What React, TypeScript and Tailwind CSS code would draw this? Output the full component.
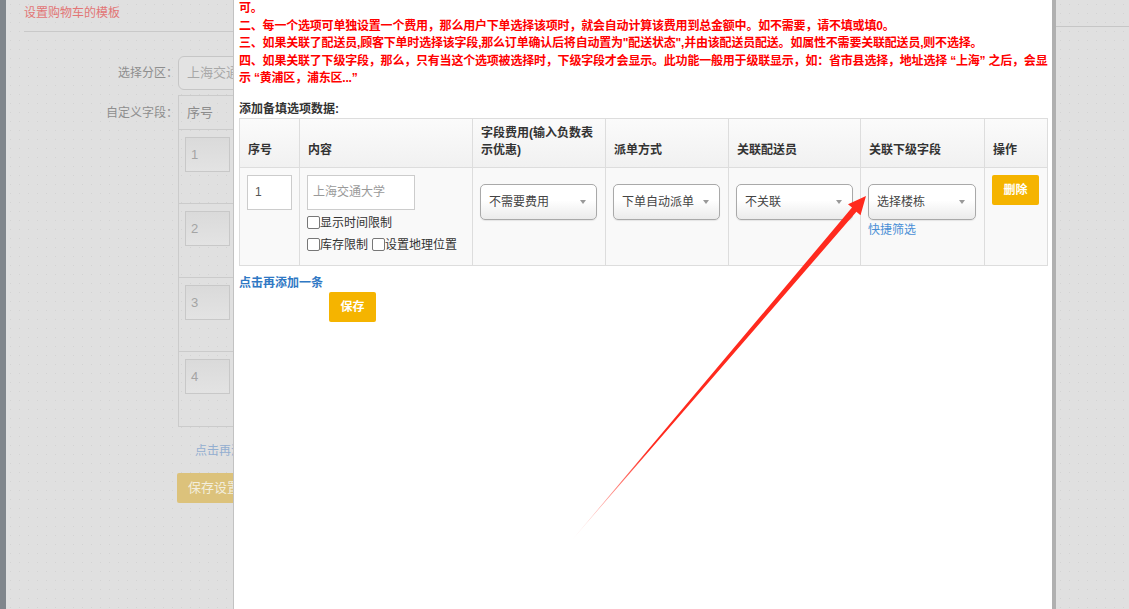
import React from "react"

const font = "font-['Liberation_Sans','Noto_Sans_CJK_SC',sans-serif]"

const notes = [
  "可。",
  "二、每一个选项可单独设置一个费用，那么用户下单选择该项时，就会自动计算该费用到总金额中。如不需要，请不填或填0。",
  "三、如果关联了配送员,顾客下单时选择该字段,那么订单确认后将自动置为\"配送状态\",并由该配送员配送。如属性不需要关联配送员,则不选择。",
  "四、如果关联了下级字段，那么，只有当这个选项被选择时，下级字段才会显示。此功能一般用于级联显示，如：省市县选择，地址选择 “上海” 之后，会显",
  "示 “黄浦区，浦东区...”",
]

const Arrow = () => (
  <span className="inline-block w-0 h-0 border-x-[3px] border-x-transparent border-t-[4px] border-t-[#999]" />
)

const Select = ({ label, width }: { label: string; width: string }) => (
  <div
    className={`${width} h-[36px] mt-[9px] rounded-[5px] border border-[#a9a9a9] bg-gradient-to-b from-white from-45% to-[#ebebeb] flex items-center justify-between pl-[8px] pr-[10px] text-[12px] text-[#444] shadow-[0_1px_1px_rgba(0,0,0,0.08)]`}
  >
    <span>{label}</span>
    <Arrow />
  </div>
)

const Check = ({ label }: { label: string }) => (
  <span className="inline-flex items-center">
    <span className="inline-block w-[13px] h-[13px] border border-[#777] rounded-[2px] bg-white" />
    <span>{label}</span>
  </span>
)

const dots = "bg-[radial-gradient(#d3d3d3_0.6px,transparent_0.7px)] bg-[length:9px_9px]"

// 背景页面（被弹窗遮住的部分）
const BackgroundPage = () => (
  <div className="flex h-full">
    <div className="w-[6px] h-full bg-[#80868c]" />
    <div className={`w-[1050px] h-full overflow-hidden pl-[18px] ${dots}`}>
      <div className="pt-[5px] leading-[16px] text-[12px] text-[#e27575]">设置购物车的模板</div>
      <div className="mt-[10px] border-b border-[#c9c9c9]" />
      <div className="mt-[24px] flex items-center">
        <div className="w-[154px] text-right text-[12px] text-[#8e8e8e]">选择分区：</div>
        <div className="w-[300px] h-[34px] rounded-[6px] border border-[#c6c6c6] bg-[#e3e3e3] flex items-center pl-[8px] text-[13px] text-[#a8a8a8]">
          上海交通大学
        </div>
      </div>
      <div className="mt-[5px] flex">
        <div className="w-[154px] pt-[9px] text-right text-[12px] text-[#8e8e8e]">自定义字段：</div>
        <div className="w-[600px] border border-[#cbcbcb]">
          <div className="h-[34px] flex items-center pl-[8px] text-[13px] text-[#8c8c8c] border-b border-[#cbcbcb]">序号</div>
          {["1", "2", "3", "4"].map((n, i) => (
            <div key={n} className={`h-[74px] pt-[7px] pl-[6px] ${i < 3 ? "border-b border-[#cbcbcb]" : ""}`}>
              <div className="w-[45px] h-[35px] border border-[#c8c8c8] bg-gradient-to-b from-[#dadada] to-[#e3e3e3] flex items-center pl-[5px] text-[13px] text-[#a4a4a4]">
                {n}
              </div>
            </div>
          ))}
        </div>
      </div>
      <div className="mt-[16px] pl-[171px] text-[12px] text-[#93aed0] leading-[16px]">点击再添加一条</div>
      <div className="mt-[14px] ml-[153px] w-[120px] h-[30px] rounded-[2px] bg-[#dcc27b] flex items-center pl-[11px] text-[13px] text-[#f3eedd]">
        保存设置
      </div>
    </div>
    <div className={`flex-1 h-full ${dots}`}>
      <div className="h-[27px] border-b border-[#c6c6c6]" />
    </div>
  </div>
)

const th = "border border-[#dddddd] align-bottom text-left px-[8px] pb-[8px] pt-0 leading-[17px] font-bold text-[12px] text-[#333]"
const td = "border border-[#dddddd] align-top px-[7px] pt-[7px] pb-0"

export default function App() {
  return (
    <div className={`relative w-[1129px] h-[609px] overflow-hidden bg-[#e0e0e0] ${font}`}>
      <BackgroundPage />

      {/* 弹窗 */}
      <div className="absolute left-[233px] top-0 w-[823px] h-full bg-white border-l border-[#c2c2c2] border-r-[4px] border-r-[#b0b0b0] pl-[5px]">
        <div className="text-[12px] font-bold text-[#ff0000] leading-[17.5px] tracking-[-0.2px]">
          {notes.map((line) => (
            <div key={line} className="whitespace-nowrap">
              {line}
            </div>
          ))}
        </div>
        <div className="mt-[12px] leading-[18px] text-[12px] font-bold text-[#333]">添加备填选项数据:</div>

        <table className="table-fixed border-collapse w-[808px]">
          <colgroup>
            <col className="w-[60px]" />
            <col className="w-[173px]" />
            <col className="w-[133px]" />
            <col className="w-[123px]" />
            <col className="w-[132px]" />
            <col className="w-[124px]" />
            <col className="w-[63px]" />
          </colgroup>
          <thead>
            <tr className="h-[49px] bg-gradient-to-b from-[#fbfbfb] to-[#f1f1f1]">
              <th className={th}>序号</th>
              <th className={th}>内容</th>
              <th className={th}>
                字段费用(输入负数表
                <br />
                示优惠)
              </th>
              <th className={th}>派单方式</th>
              <th className={th}>关联配送员</th>
              <th className={th}>关联下级字段</th>
              <th className={th}>操作</th>
            </tr>
          </thead>
          <tbody>
            <tr className="h-[98px] bg-[#f9f9f9]">
              <td className={td}>
                <div className="w-[45px] h-[35px] border border-[#cccccc] bg-white flex items-center pl-[7px] text-[12px] text-[#555]">1</div>
              </td>
              <td className={td}>
                <div className="w-[108px] h-[35px] border border-[#cccccc] bg-white flex items-center pl-[5px] text-[12px] text-[#9a9a9a]">
                  上海交通大学
                </div>
                <div className="mt-[2px] text-[12px] text-[#333]">
                  <div className="h-[22px] flex items-center">
                    <Check label="显示时间限制" />
                  </div>
                  <div className="h-[22px] flex items-center gap-[4px]">
                    <Check label="库存限制" />
                    <Check label="设置地理位置" />
                  </div>
                </div>
              </td>
              <td className={td}>
                <Select label="不需要费用" width="w-[117px]" />
              </td>
              <td className={td}>
                <Select label="下单自动派单" width="w-[107px]" />
              </td>
              <td className={td}>
                <Select label="不关联" width="w-[117px]" />
              </td>
              <td className={td}>
                <Select label="选择楼栋" width="w-[108px]" />
                <div className="mt-[2px] leading-[16px] text-[12px] text-[#4a8fd6]">快捷筛选</div>
              </td>
              <td className={td}>
                <div className="w-[47px] h-[30px] rounded-[2px] bg-[#f5b400] flex items-center justify-center text-[12px] font-bold text-white">
                  删除
                </div>
              </td>
            </tr>
          </tbody>
        </table>

        <div className="mt-[9px] leading-[16px] text-[12px] font-bold text-[#2f78c4]">点击再添加一条</div>
        <div className="mt-[1px] ml-[90px] w-[47px] h-[30px] rounded-[2px] bg-[#f5b400] flex items-center justify-center text-[12px] font-bold text-white">
          保存
        </div>
      </div>

      {/* 标注箭头 */}
      <svg className="absolute inset-0 pointer-events-none" width="1129" height="609" viewBox="0 0 1129 609">
        <defs>
          <linearGradient id="fade" gradientUnits="userSpaceOnUse" x1="572" y1="540" x2="650" y2="449">
            <stop offset="0" stopColor="#ff2a1e" stopOpacity="0.05" />
            <stop offset="1" stopColor="#ff2a1e" stopOpacity="1" />
          </linearGradient>
        </defs>
        <polygon
          points="572,540 852,207.6 848,204.2 866,196 860.5,215.2 856.4,211.8"
          fill="url(#fade)"
        />
      </svg>
    </div>
  )
}
